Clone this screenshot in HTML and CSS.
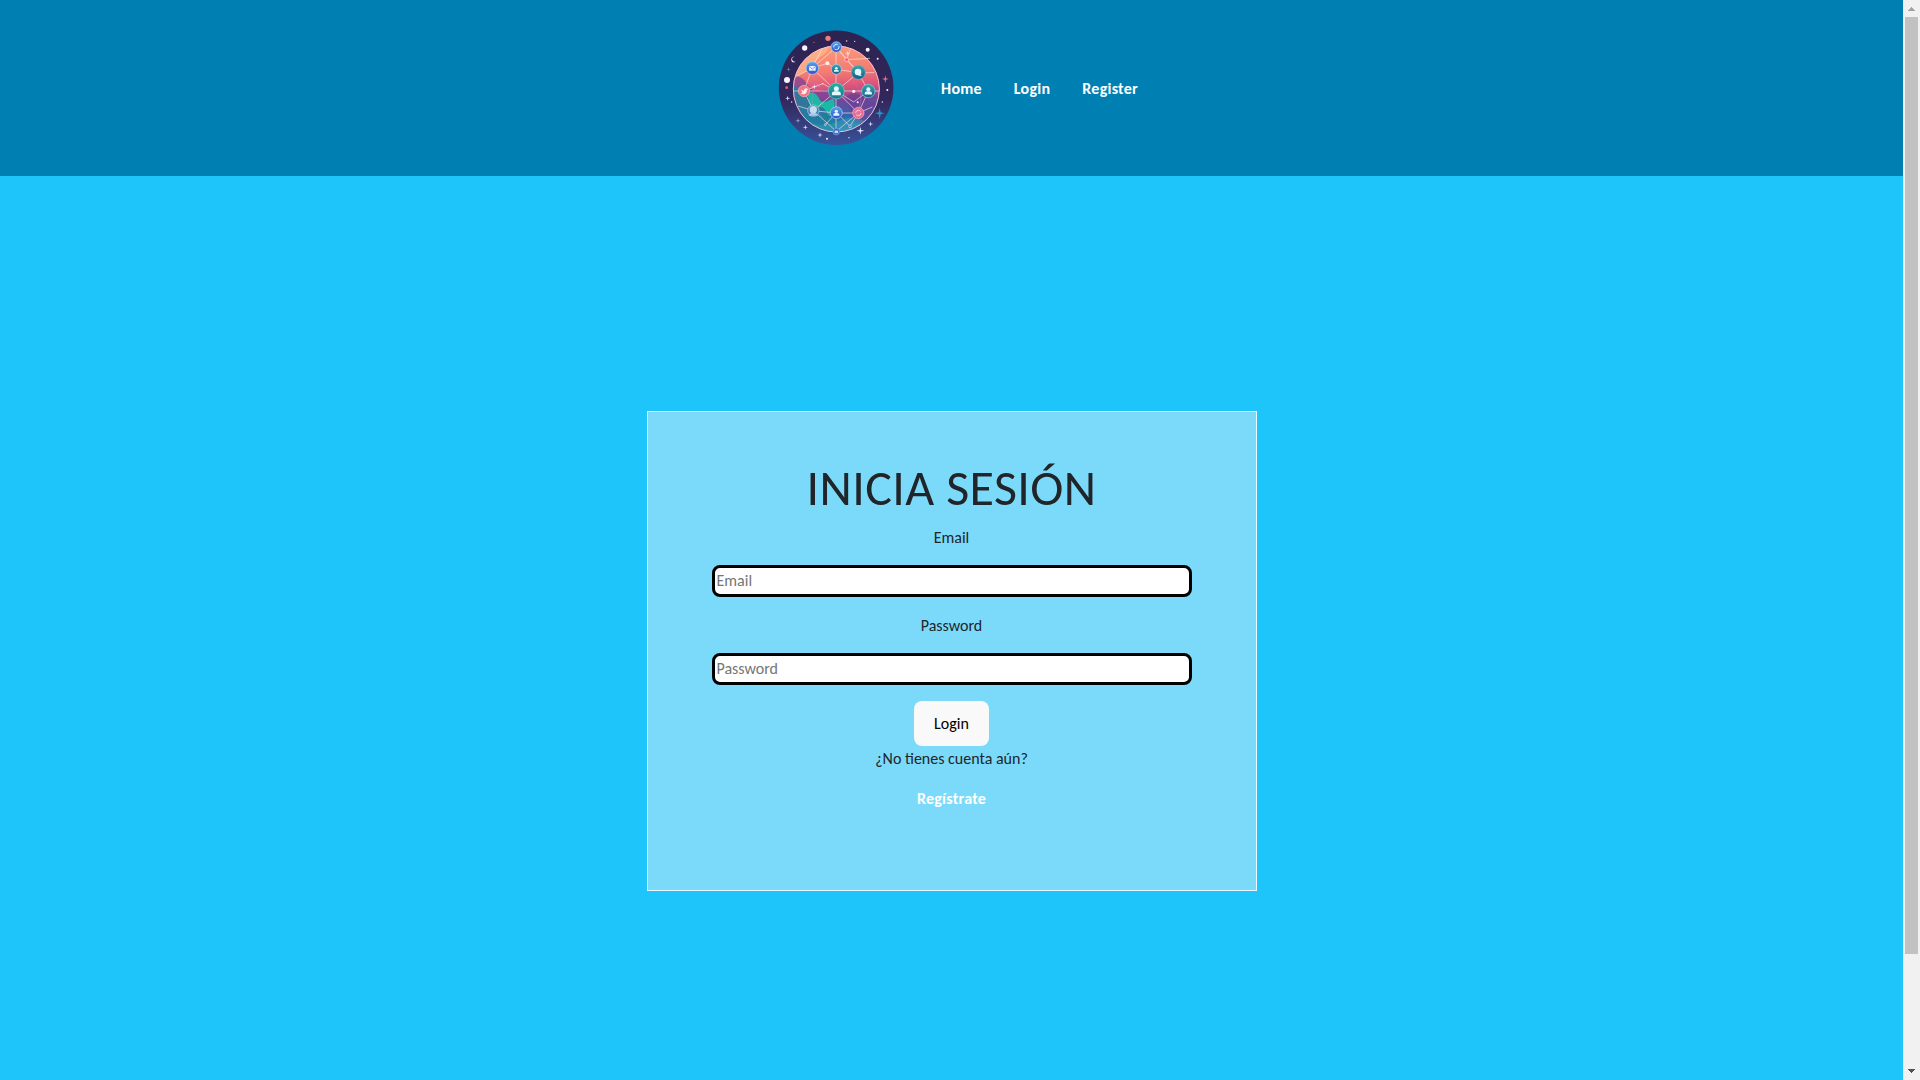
FILE: index.html
```
<!DOCTYPE html>
<html lang="es">
<head>
<meta charset="utf-8">
<title>Inicia sesión</title>
<link rel="stylesheet" href="styles.css">
</head>
<body>
<div class="page">
  <header class="header">
    <svg class="logo" viewBox="24 30 348 348" aria-label="Logo">
      <defs>
        <linearGradient id="rim" x1="0" y1="0" x2="0" y2="1"><stop offset="0" stop-color="#2c2351"/><stop offset=".6" stop-color="#32275c"/><stop offset="1" stop-color="#38529a"/></linearGradient>
        <linearGradient id="globe" x1=".45" y1="0" x2=".55" y2="1"><stop offset="0" stop-color="#fb9d78"/><stop offset=".3" stop-color="#f47b72"/><stop offset=".5" stop-color="#d8507c"/><stop offset=".64" stop-color="#70479a"/><stop offset=".82" stop-color="#3266ae"/><stop offset="1" stop-color="#3192ba"/></linearGradient>
        <linearGradient id="blue" x1="0" y1="0" x2="0" y2="1"><stop offset="0" stop-color="#54a5f0"/><stop offset="1" stop-color="#344dcb"/></linearGradient>
        <linearGradient id="teal" x1="0" y1="0" x2="0" y2="1"><stop offset="0" stop-color="#39a6ae"/><stop offset="1" stop-color="#145a85"/></linearGradient>
        <linearGradient id="green" x1="0" y1="0" x2="0" y2="1"><stop offset="0" stop-color="#28b1a5"/><stop offset="1" stop-color="#16758e"/></linearGradient>
        <clipPath id="disc"><circle cx="199" cy="207" r="129"/></clipPath>
        <g id="person" fill="#e3f7ff"><circle cy="-5" r="5"/><path d="M-9 8v-3q0-5 6-5h6q6 0 6 5v3z"/></g>
        <path id="spark" fill="#e9e5ff" d="M0-8 1.5-1.5 8 0 1.5 1.5 0 8-1.5 1.5-8 0-1.5-1.5z"/>
      </defs>
      <circle cx="198.500" cy="203.500" r="172" fill="url(#rim)"/>
      <circle cx="199" cy="207" r="130" fill="url(#globe)"/>
      <g clip-path="url(#disc)">
        <path d="M60 60h105q20 28-5 44t-32 34-68 35z" fill="#fdbb8c" opacity=".65"/>
        <path d="M235 60h110v110q-28-18-44-44t-66-66z" fill="#fc9b77" opacity=".7"/>
        <path d="M60 165q38 0 51 27t43 19 38 26l-22 45-110-18z" fill="#7b4396" opacity=".75"/>
        <path d="M60 195q46 12 62 35t47 12 30 30l8 75H60z" fill="#1e829f" opacity=".8"/>
        <path d="M113 220q22-8 33 14t32 7 14 24-22 12-31-8-26-49z" fill="#1cb7a5"/>
        <path d="M230 230q22-24 61 8t50-20l-8 72-44 30-43-17z" fill="#713b91" opacity=".62"/>
        <path d="M90 290q55 42 109 16t93 4v45H90z" fill="#319dbb" opacity=".55"/>
        <path d="M148 181q-49 61 10 112M247 181q50 54 3 109M105 185q34-7 45 20" fill="none" stroke="#d47acc" stroke-width="2" opacity=".55"/>
      </g>
      <circle cx="199" cy="207" r="129" fill="none" stroke="#f3bdd0" stroke-width="3"/>
      <g fill="none" stroke="#ffe6e5" stroke-width="2.500" opacity=".75">
        <path d="M198 82v252M72 213h256M126 144 199 82 265 158M126 144 102 213 130 272 199 334 265 279 295 213 265 158M199 213 130 272M199 213 265 279M199 213 126 144M199 213 265 158M198 82l32 37 35 39M230 119l70-4M265 158l48 0M76 171l50-27 47-14 25 18M130 272l68 7 67 0 42-18M166 314l33-36 41 41M84 258l46 14M199 213l-41-22-56 22M265 158l-66-10M240 319l25-40M295 213l-44 33-52-33M155 89l-29 55M240 89l-10 30"/>
      </g>
      <g fill="#e7648b" stroke="#ffd9da" stroke-width="2"><circle cx="230" cy="119" r="6"/><circle cx="240" cy="319" r="4" fill="#426cc1"/><circle cx="166" cy="314" r="3" fill="#3683bb"/></g>
      <g fill="#ffecec"><circle cx="172" cy="130" r="6"/><circle cx="251" cy="214" r="5"/><circle cx="158" cy="191" r="2"/><circle cx="263" cy="247" r="3"/></g>
      <g stroke="#b3d4f4" stroke-width="2">
        <circle cx="199" cy="81" r="16" fill="url(#blue)"/>
        <circle cx="127" cy="144" r="19" fill="url(#blue)"/>
        <circle cx="199" cy="148" r="15" fill="url(#teal)"/>
        <circle cx="265" cy="157" r="21" fill="url(#teal)" stroke="#5dbac1"/>
        <circle cx="102" cy="213" r="17" fill="#ef7686" stroke="#ffb5b5"/>
        <circle cx="199" cy="213" r="24" fill="url(#green)" stroke="#73d3c4"/>
        <circle cx="295" cy="213" r="20" fill="url(#teal)" stroke="#88d1db"/>
        <circle cx="130" cy="272" r="17" fill="#467fae"/>
        <circle cx="199" cy="278" r="18" fill="url(#blue)"/>
        <circle cx="265" cy="279" r="17" fill="#e66e96" stroke="#ffafbd"/>
        <circle cx="199" cy="335" r="10" fill="#416ac6" stroke="#8999e3"/>
      </g>
      <circle cx="199" cy="81" r="8" fill="none" stroke="#d6f0ff" stroke-width="3" stroke-dasharray="18 5"/>
      <path d="M117 138h20v14h-20z" fill="#e7f4ff"/><path d="m117 139 10 8 10-8" fill="none" stroke="#466cd5" stroke-width="2"/>
      <use href="#person" transform="translate(199 149) scale(.8)"/>
      <circle cx="264" cy="156" r="10" fill="#e2f6ff"/><path d="m268 159 8 8h-11z" fill="#e2f6ff"/>
      <path d="M93 208q5 5 9 4 0-7 6-7l7 2-4 4q-1 13-12 12l-8-3 6-2z" fill="#ffede9"/>
      <use href="#person" transform="translate(199 214) scale(1.500)"/>
      <use href="#person" transform="translate(295 214) scale(1.200)"/>
      <circle cx="130" cy="269" r="11" fill="#c0deef"/><path d="M116 287q2-9 14-9t14 9z" fill="#b6c4ee"/>
      <use href="#person" transform="translate(199 279)"/>
      <circle cx="265" cy="279" r="8" fill="none" stroke="#ffd1dc" stroke-width="3" stroke-dasharray="19 6"/>
      <path d="M194 332h10v7h-10z" fill="#c2dcff"/>
      <g fill="#f6f3ff"><circle cx="104" cy="84" r="8"/><circle cx="51" cy="180" r="9"/><circle cx="293" cy="89" r="6"/><circle cx="174" cy="55" r="8" fill="#e98080"/><circle cx="50" cy="203" r="4" fill="#df6688"/><circle cx="323" cy="116" r="3"/><circle cx="132" cy="67" r="2" fill="#c96a86"/><circle cx="230" cy="63" r="2"/><circle cx="254" cy="64" r="2"/><circle cx="352" cy="210" r="3"/><circle cx="65" cy="246" r="2"/><circle cx="171" cy="356" r="3"/><circle cx="237" cy="353" r="2"/><circle cx="337" cy="246" r="2"/></g>
      <path d="M74 109q-14 8-4 15l7 2q-13 4-13-7 0-8 10-10z" fill="#f6f3ff"/>
      <use href="#spark" x="53" y="235"/><use href="#spark" x="106" y="322"/><use href="#spark" x="150" y="345"/><use href="#spark" x="302" y="312"/><use href="#spark" x="84" y="302" opacity=".6"/><use href="#spark" x="233" y="100"/><use href="#spark" x="133" y="200"/>
      <use href="#spark" transform="translate(271 332) scale(1.500)"/>
      <path d="m346 166 2 9 8 2-8 2-2 10-2-10-8-2 8-2z" fill="#e97090"/>
      <path d="m329 264 3 13 11 3-11 3-3 14-3-14-11-3 11-3z" fill="#1d98cd"/>
      <path d="m56 140 1 7 6 1-6 1-1 7-1-7-6-1 6-1z" fill="#4dadcf"/>
    </svg>
    <nav class="nav">
      <a href="#">Home</a>
      <a href="#">Login</a>
      <a href="#">Register</a>
    </nav>
  </header>
  <main class="main">
    <form class="card">
      <h1 class="title">INICIA SESIÓN</h1>
      <label class="label" for="email">Email</label>
      <input class="field" id="email" type="email" placeholder="Email">
      <label class="label" for="password">Password</label>
      <input class="field" id="password" type="password" placeholder="Password">
      <button class="button" type="button">Login</button>
      <p class="hint">¿No tienes cuenta aún?</p>
      <a class="register" href="#">Regístrate</a>
    </form>
  </main>
</div>
<div class="scrollbar">
  <svg class="arrow" viewBox="0 0 17 17"><path d="M8 7h1v1h1v1h1v1h1v1H5v-1h1V9h1V8h1z" fill="#a3a3a3"/></svg>
  <div class="thumb"></div>
  <svg class="arrow" viewBox="0 0 17 17"><path d="M5 6h7v1h-1v1h-1v1H9v1H8V9H7V8H6V7H5z" fill="#505050"/></svg>
</div>
</body>
</html>
```
FILE: styles.css
```
* { box-sizing: border-box; }
body {
  margin: 0;
  height: 1080px;
  display: flex;
  overflow: hidden;
  background: #1ec5fa;
  color: #212529;
  font: 16px/24px Calibri, Carlito, Lato, sans-serif;
}
.page { flex: 1; display: flex; flex-direction: column; }
.header {
  height: 176px;
  padding-left: 13px;
  display: flex;
  justify-content: center;
  align-items: center;
  gap: 47px;
  background: #0080b2;
}
.logo { width: 116px; height: 116px; }
.nav { padding-top: 1px; display: flex; gap: 32px; }
a { color: #fff; font-weight: 700; letter-spacing: .25px; text-decoration: none; }
.main { padding-top: 235px; display: flex; justify-content: center; }
.card {
  width: 610px;
  height: 480px;
  padding: 46px 64px 0;
  display: flex;
  flex-direction: column;
  align-items: center;
  background: #7bdafa;
  border: 1px solid #e9f9ff;
}
.title {
  margin: 0 0 7px;
  font-size: 50px;
  font-weight: 400;
  line-height: 60px;
  letter-spacing: .4px;
}
.label { padding-top: 1px; margin-bottom: 15px; }
.field {
  width: 480px;
  height: 32px;
  margin: 0 0 16px;
  padding: 0 2px 1px;
  border: 3px solid #000;
  border-radius: 8px;
  background: #fff;
  font: inherit;
}
.field::placeholder { color: #757575; }
.button {
  width: 75px;
  height: 45px;
  padding: 0;
  border: 0;
  border-radius: 8px;
  background: #f9f9f9;
  color: #000;
  font: inherit;
}
.hint { margin: 0 0 16px; padding-top: 1px; }
.scrollbar {
  width: 17px;
  display: flex;
  flex-direction: column;
  background: #f1f1f1;
}
.arrow { width: 17px; height: 17px; }
.thumb { height: 937px; margin: 0 2px 109px; background: #c1c1c1; }
```
